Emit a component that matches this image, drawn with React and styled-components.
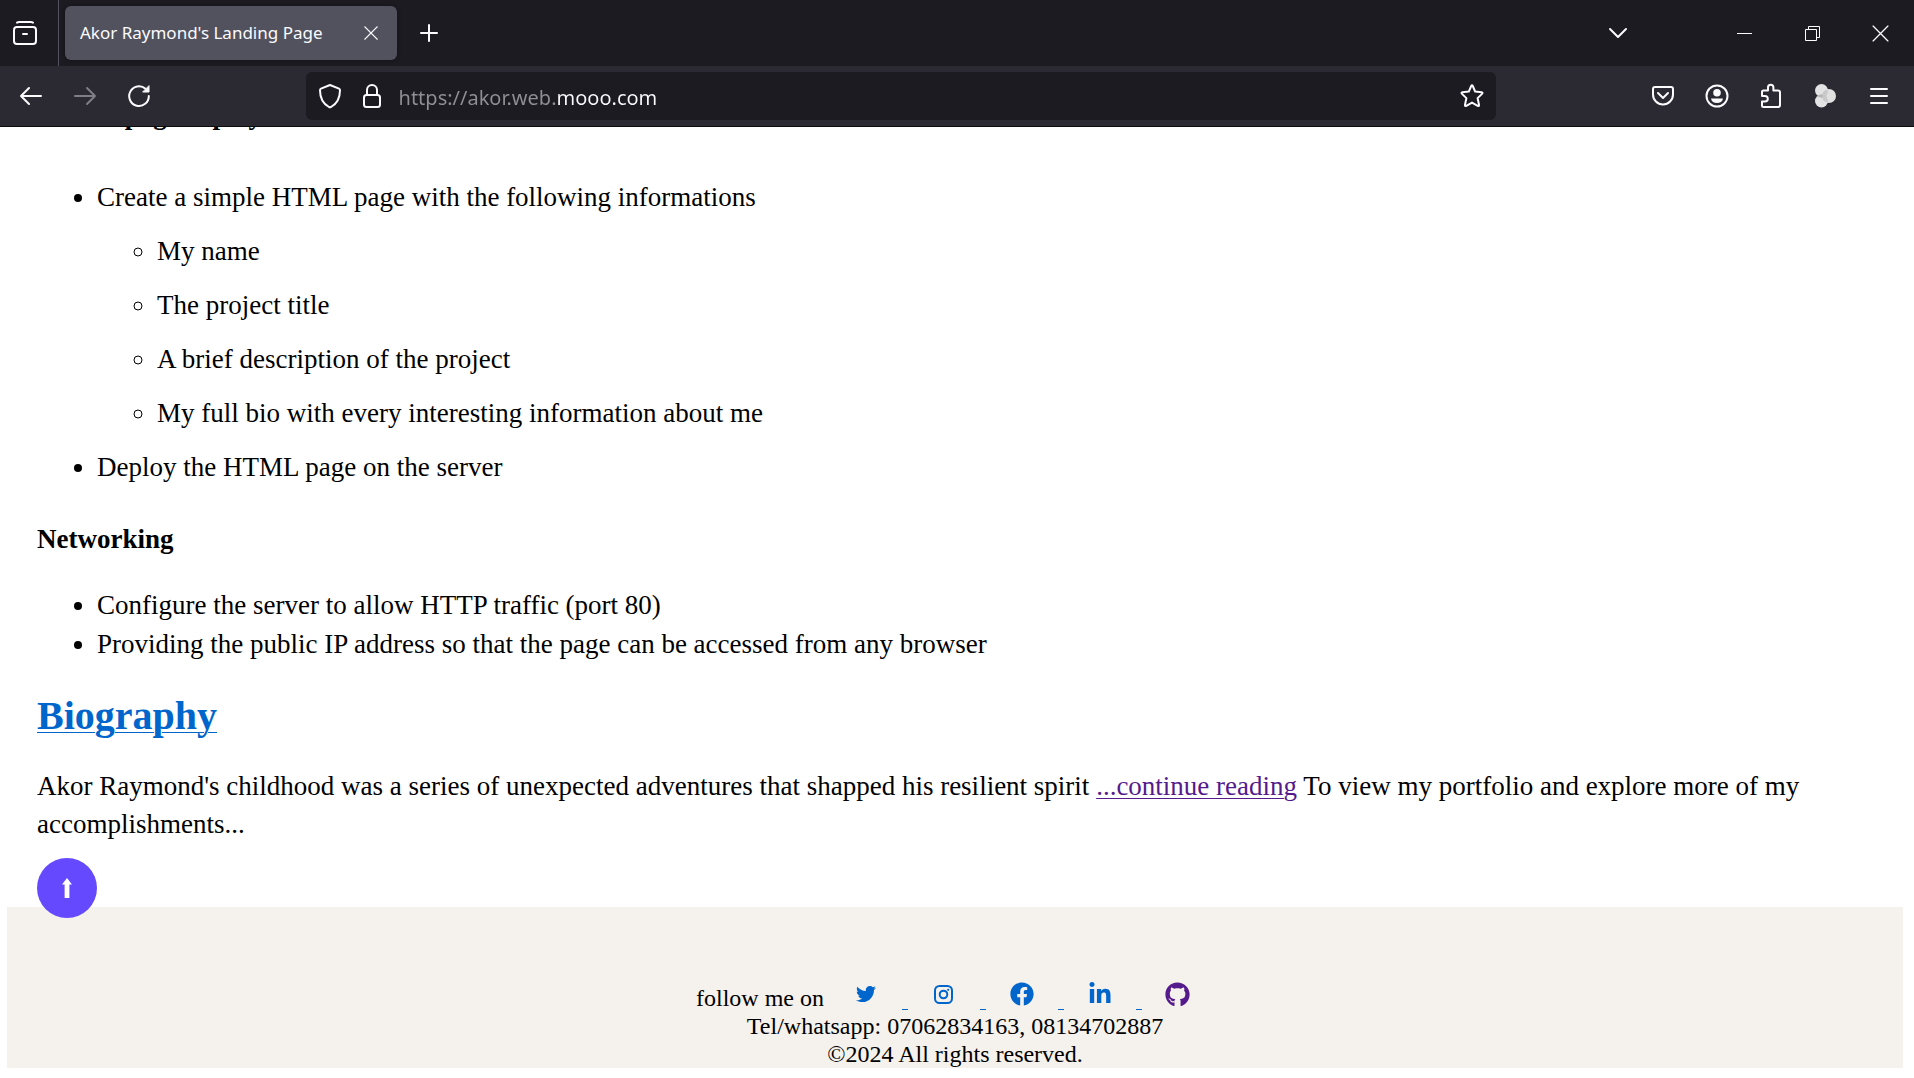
import React from 'react';
import styled, { createGlobalStyle } from 'styled-components';
import { FaTwitter, FaFacebook, FaLinkedinIn, FaGithub } from 'react-icons/fa';

const UI_FONT = '"Noto Sans", "Open Sans", sans-serif';
const PAGE_FONT = '"Liberation Serif", "Times New Roman", serif';

const GlobalStyle = createGlobalStyle`
  *, *::before, *::after { box-sizing: border-box; }
  body { margin: 0; background: #fff; }
`;

const Window = styled.div`
  display: flex;
  flex-direction: column;
  height: 100vh;
  overflow: hidden;
`;

const TabBar = styled.header`
  display: flex;
  flex: none;
  align-items: center;
  height: 66px;
  background: #1c1b22;
  color: #fbfbfe;
`;

const IconButton = styled.button`
  display: flex;
  flex: none;
  align-items: center;
  justify-content: center;
  width: ${(p) => p.$width || 54}px;
  height: 48px;
  padding: 0;
  border: 0;
  background: transparent;
  color: #fbfbfe;
  &:disabled { color: #7f7e85; }
`;

const RecentView = styled.div`
  display: flex;
  align-items: center;
  align-self: stretch;
  padding: 0 8px 0 0;
  margin-right: 6px;
  border-right: 1px solid #52525e;
`;

const Tab = styled.div`
  display: flex;
  align-items: center;
  justify-content: space-between;
  width: 332px;
  height: 54px;
  padding: 0 8px 0 15px;
  border-radius: 6px;
  background: #52525e;
  box-shadow: 0 0 4px rgba(0, 0, 0, 0.4);
`;

const TabTitle = styled.span`
  font: 17px/24px ${UI_FONT};
  white-space: nowrap;
`;

const Spacer = styled.div`
  flex: 1;
`;

const WindowControls = styled.div`
  display: flex;
  margin-left: 65px;
`;

const NavBar = styled.nav`
  display: flex;
  flex: none;
  align-items: center;
  height: 61px;
  padding: 0 8px 0 4px;
  border-bottom: 1px solid #0c0c0d;
  background: #2b2a33;
`;

const NavSide = styled.div`
  display: flex;
  flex: 302 1 0;
`;

const NavEnd = styled.div`
  display: flex;
  flex: 411 1 0;
  justify-content: flex-end;
`;

const UrlBar = styled.form`
  display: flex;
  flex: 1189 1 0;
  align-items: center;
  height: 48px;
  padding: 0 0 0 3px;
  border-radius: 6px;
  background: #1c1b22;
`;

const UrlInput = styled.input`
  flex: 1;
  min-width: 0;
  margin-left: 6px;
  padding: 4px 0 0;
  border: 0;
  outline: 0;
  font: 20px/32px ${UI_FONT};
  color: transparent;
  background: linear-gradient(to right, #8f8f94 157px, #fbfbfe 157px);
  background-clip: text;
`;

const Viewport = styled.main`
  display: flex;
  flex: 1;
  flex-direction: column;
  justify-content: flex-end;
  min-height: 0;
  overflow: hidden;
  padding: 0 11px 10px 7px;
  font-family: ${PAGE_FONT};
  color: #000;
`;

const Article = styled.article`
  display: flex;
  flex-direction: column;
  padding: 0 30px;
  font-size: 27px;
  line-height: 38px;
`;

const SectionTitle = styled.h4`
  margin: 0 0 28px;
  font-size: 27px;
`;

const List = styled.ul`
  margin: ${(p) => p.$margin || '0'};
  padding: 0 0 0 60px;
  list-style: ${(p) => (p.$nested ? 'circle' : 'disc')};
`;

const Item = styled.li`
  margin-top: ${(p) => (p.$loose ? 16 : 0)}px;
  line-height: ${(p) => (p.$loose ? 38 : 39)}px;
`;

const BioTitle = styled.h2`
  margin: 0 0 23px;
  font-size: 40px;
  line-height: 56px;
`;

const PageLink = styled.a`
  color: ${(p) => (p.$visited ? '#551a8b' : '#0066cc')};
  text-decoration-thickness: 1px;
  text-underline-offset: 3px;
`;

const Paragraph = styled.p`
  margin: 0;
`;

const TopButton = styled.button`
  position: relative;
  display: flex;
  align-items: center;
  justify-content: center;
  width: 60px;
  height: 60px;
  margin: 15px 0 -11px;
  padding: 0;
  border: 0;
  border-radius: 50%;
  background: #6449ff;
  color: #fff;
`;

const Footer = styled.footer`
  padding: 77px 0 0;
  background: #f5f1ec;
  font-size: 24px;
  line-height: 28px;
  text-align: center;
`;

const FooterLine = styled.div`
  white-space: nowrap;
`;

const SocialIcon = styled.span`
  display: inline-flex;
  align-items: center;
  justify-content: center;
  width: 72px;
  height: 20px;
  vertical-align: top;
`;

const svgProps = {
  fill: 'none',
  stroke: 'currentColor',
  strokeLinecap: 'round',
  strokeLinejoin: 'round',
};

const RecentIcon = () => (
  <svg {...svgProps} width="26" height="26" viewBox="0 0 26 26" strokeWidth="2">
    <path d="M5 2.6 Q6 2 7 2 H19 Q20 2 21 2.6" />
    <rect x="2" y="7" width="22" height="17" rx="3" />
    <path d="M11 14 H15" />
  </svg>
);

const CloseIcon = ({ size, width }) => (
  <svg {...svgProps} width={size} height={size} viewBox="0 0 16 16" strokeWidth={width}>
    <path d="M1 1 L15 15 M15 1 L1 15" />
  </svg>
);

const PlusIcon = () => (
  <svg {...svgProps} width="20" height="20" viewBox="0 0 20 20" strokeWidth="2">
    <path d="M10 2 V18 M2 10 H18" />
  </svg>
);

const ArrowIcon = ({ forward }) => (
  <svg {...svgProps} width="24" height="20" viewBox="0 0 24 20" strokeWidth="2">
    {forward ? (
      <path d="M2 10 H22 M14 2 L22 10 L14 18" />
    ) : (
      <path d="M22 10 H2 M10 2 L2 10 L10 18" />
    )}
  </svg>
);

const ReloadIcon = () => (
  <svg {...svgProps} width="24" height="24" viewBox="0 0 24 24" strokeWidth="2">
    <path d="M21.8 12 A9.8 9.8 0 1 1 18.5 4.8" />
    <path d="M22 2 V8 H16 Z" fill="currentColor" strokeWidth="1" />
  </svg>
);

const ShieldIcon = () => (
  <svg {...svgProps} width="24" height="26" viewBox="0 0 24 26" strokeWidth="2">
    <path d="M12 2 L21 5.6 Q22 6 22 7.2 C22 15.5 19 20.6 13 24 Q12 24.5 11 24 C5 20.6 2 15.5 2 7.2 Q2 6 3 5.6 Z" />
  </svg>
);

const LockIcon = () => (
  <svg {...svgProps} width="20" height="26" viewBox="0 0 20 26" strokeWidth="2">
    <path d="M5 12 V7 A5 5 0 0 1 15 7 V12" />
    <rect x="2" y="12" width="16" height="12" rx="2.5" />
  </svg>
);

const StarIcon = () => (
  <svg {...svgProps} width="24" height="24" viewBox="0 0 24 24" strokeWidth="2">
    <path d="M11.2 2 Q12 .6 12.8 2 L15.2 7.6 L21.6 8.3 Q23.2 8.6 22 9.9 L17.6 14.1 L19 20.8 Q19.2 22.5 17.7 21.8 L12 18.6 L6.3 21.8 Q4.8 22.5 5 20.8 L6.4 14.1 L2 9.9 Q.8 8.6 2.4 8.3 L8.8 7.6 Z" />
  </svg>
);

const PocketIcon = () => (
  <svg {...svgProps} width="24" height="22" viewBox="0 0 24 22" strokeWidth="2">
    <path d="M4 2 H20 Q22 2 22 4 V9.5 A10 10 0 0 1 2 9.5 V4 Q2 2 4 2 Z" />
    <path d="M7 8 L12 13 L17 8" />
  </svg>
);

const AccountIcon = () => (
  <svg {...svgProps} width="24" height="24" viewBox="0 0 24 24" strokeWidth="2">
    <circle cx="12" cy="12" r="10.5" />
    <circle cx="12" cy="8.8" r="3.8" fill="currentColor" stroke="none" />
    <path d="M6 14.5 H18 C17.6 17.5 15 19 12 19 S6.4 17.5 6 14.5 Z" fill="currentColor" stroke="none" />
  </svg>
);

const ExtensionsIcon = () => (
  <svg {...svgProps} width="22" height="26" viewBox="0 0 22 26" strokeWidth="2">
    <path d="M2 13 V9 Q2 7.5 3.5 7.5 H8 V4.5 A2.7 2.7 0 0 1 13.4 4.5 V7.5 H18 Q20 7.5 20 9.5 V22 Q20 24 18 24 H3.5 Q2 24 2 22.5 V18.6 H5 A2.8 2.8 0 0 0 5 13 Z" />
  </svg>
);

const AddonIcon = () => (
  <svg width="24" height="24" viewBox="0 0 24 24">
    <circle cx="8.5" cy="6.5" r="6.5" fill="#e3e3e3" />
    <circle cx="8.5" cy="17" r="6.5" fill="#e3e3e3" />
    <circle cx="16" cy="12" r="7" fill="#e0e0e0" />
    <path d="M4 12 Q9 8.5 14 12 Q9 15.5 4 12 Z" fill="#b5b5b5" />
    <path d="M9.6 9 Q12 4.5 15 6.5 Q14.5 11 12.5 12 Q14.5 13 15 17.5 Q12 19.5 9.6 15 Z" fill="#c9c9c9" />
  </svg>
);

const MenuIcon = () => (
  <svg {...svgProps} width="20" height="18" viewBox="0 0 20 18" strokeWidth="2">
    <path d="M2 2 H18 M2 9 H18 M2 16 H18" />
  </svg>
);

const ChevronIcon = () => (
  <svg {...svgProps} width="20" height="12" viewBox="0 0 20 12" strokeWidth="2">
    <path d="M2 2 L10 10 L18 2" />
  </svg>
);

const MinimizeIcon = () => (
  <svg width="15" height="1" viewBox="0 0 15 1">
    <path d="M0 0 H15 V1 H0 Z" fill="currentColor" />
  </svg>
);

const RestoreIcon = () => (
  <svg fill="none" stroke="currentColor" width="15" height="15" viewBox="0 0 15 15">
    <path d="M.5 3.5 H11.5 V14.5 H.5 Z M3.5 3.5 V.5 H14.5 V11.5 H11.5" />
  </svg>
);

const UpIcon = () => (
  <svg width="10" height="20" viewBox="0 0 10 20" fill="currentColor">
    <path d="M5 0 L10 6.5 H7.4 V20 H2.6 V6.5 H0 Z" />
  </svg>
);

const InstagramIcon = () => (
  <svg {...svgProps} width="19" height="19" viewBox="0 0 19 19" strokeWidth="2">
    <rect x="1" y="1" width="17" height="17" rx="4.5" />
    <circle cx="9.5" cy="9.5" r="3.8" />
    <circle cx="14.2" cy="4.8" r="1.1" fill="currentColor" stroke="none" />
  </svg>
);

const socials = [
  { name: 'Twitter', icon: <FaTwitter size={20} /> },
  { name: 'Instagram', icon: <InstagramIcon /> },
  { name: 'Facebook', icon: <FaFacebook size={24} /> },
  { name: 'LinkedIn', icon: <FaLinkedinIn size={24} /> },
  { name: 'GitHub', icon: <FaGithub size={25} />, visited: true },
];

const pageContents = [
  'My name',
  'The project title',
  'A brief description of the project',
  'My full bio with every interesting information about me',
];

export default function App() {
  return (
    <Window>
      <GlobalStyle />
      <TabBar>
        <RecentView>
          <IconButton $width={50} aria-label="Recent browsing"><RecentIcon /></IconButton>
        </RecentView>
        <Tab>
          <TabTitle>Akor Raymond's Landing Page</TabTitle>
          <IconButton $width={36} aria-label="Close tab"><CloseIcon size={14} width={1.6} /></IconButton>
        </Tab>
        <IconButton $width={64} aria-label="New tab"><PlusIcon /></IconButton>
        <Spacer />
        <IconButton aria-label="List all tabs"><ChevronIcon /></IconButton>
        <WindowControls>
          <IconButton $width={68} aria-label="Minimize"><MinimizeIcon /></IconButton>
          <IconButton $width={68} aria-label="Restore"><RestoreIcon /></IconButton>
          <IconButton $width={68} aria-label="Close"><CloseIcon size={17} width={1.2} /></IconButton>
        </WindowControls>
      </TabBar>
      <NavBar>
        <NavSide>
          <IconButton aria-label="Back"><ArrowIcon /></IconButton>
          <IconButton disabled aria-label="Forward"><ArrowIcon forward /></IconButton>
          <IconButton aria-label="Reload"><ReloadIcon /></IconButton>
        </NavSide>
        <UrlBar>
          <IconButton type="button" $width={42} aria-label="Tracking protection"><ShieldIcon /></IconButton>
          <IconButton type="button" $width={42} aria-label="Site information"><LockIcon /></IconButton>
          <UrlInput aria-label="Address" defaultValue="https://akor.web.mooo.com" />
          <IconButton type="button" $width={48} aria-label="Bookmark this page"><StarIcon /></IconButton>
        </UrlBar>
        <NavEnd>
          <IconButton aria-label="Save to Pocket"><PocketIcon /></IconButton>
          <IconButton aria-label="Account"><AccountIcon /></IconButton>
          <IconButton aria-label="Extensions"><ExtensionsIcon /></IconButton>
          <IconButton aria-label="Add-on"><AddonIcon /></IconButton>
          <IconButton aria-label="Open menu"><MenuIcon /></IconButton>
        </NavEnd>
      </NavBar>
      <Viewport>
        <Article>
          <SectionTitle>HTML page deployment</SectionTitle>
          <List $margin="0 0 34px">
            <Item $loose>
              Create a simple HTML page with the following informations
              <List $nested>
                {pageContents.map((text) => (
                  <Item $loose key={text}>{text}</Item>
                ))}
              </List>
            </Item>
            <Item $loose>Deploy the HTML page on the server</Item>
          </List>
          <SectionTitle>Networking</SectionTitle>
          <List $margin="0 0 24px">
            <Item>Configure the server to allow HTTP traffic (port 80)</Item>
            <Item>Providing the public IP address so that the page can be accessed from any browser</Item>
          </List>
          <BioTitle><PageLink href="#biography">Biography</PageLink></BioTitle>
          <Paragraph>
            Akor Raymond's childhood was a series of unexpected adventures that shapped his resilient spirit{' '}
            <PageLink $visited href="#more">...continue reading</PageLink> To view my portfolio and explore
            more of my accomplishments...
          </Paragraph>
          <TopButton aria-label="Back to top"><UpIcon /></TopButton>
        </Article>
        <Footer>
          <FooterLine>
            follow me on{' '}
            {socials.map(({ name, icon, visited }, i) => (
              <PageLink key={name} $visited={visited} href={`#${name.toLowerCase()}`} aria-label={name}>
                <SocialIcon>{icon}</SocialIcon>
                {i < socials.length - 1 && ' '}
              </PageLink>
            ))}
          </FooterLine>
          <FooterLine>Tel/whatsapp: 07062834163, 08134702887</FooterLine>
          <FooterLine>©2024 All rights reserved.</FooterLine>
        </Footer>
      </Viewport>
    </Window>
  );
}
